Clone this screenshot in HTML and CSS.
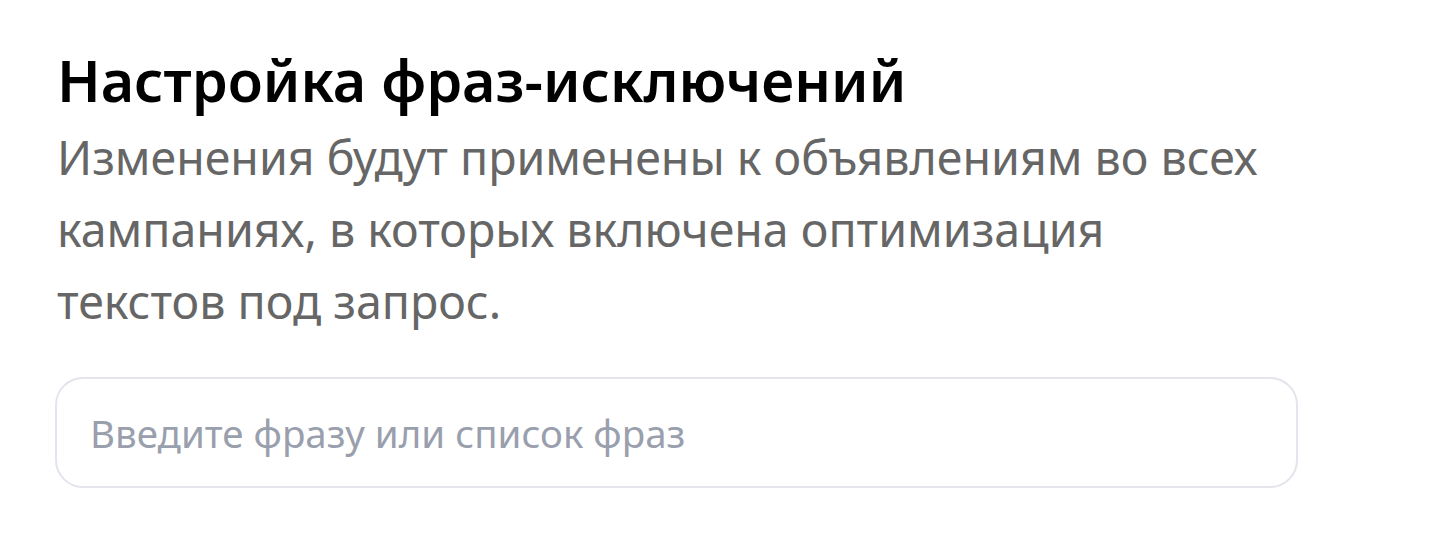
FILE: index.html
```html
<!DOCTYPE html>
<html lang="ru">
<head>
    <meta charset="UTF-8">
    <meta name="viewport" content="width=device-width, initial-scale=1.0">
    <title>Настройка фраз-исключений</title>
    <link rel="stylesheet" href="styles.css">
</head>
<body>
    <div class="panel">
        <h1 class="title">Настройка фраз-исключений</h1>
        <p class="description">
            Изменения будут применены к объявлениям во всех<br>
            кампаниях, в которых включена оптимизация<br>
            текстов под запрос.
        </p>
        <div class="field">
            <input type="text" class="field-input" placeholder="Введите фразу или список фраз">
        </div>
    </div>
</body>
</html>
```

FILE: styles.css
```css
:root {
    --text-color: #000;
    --muted-color: #666;
    --placeholder-color: #9a9fae;
    --border-color: #e3e4ec;
}

* {
    margin: 0;
    padding: 0;
    box-sizing: border-box;
}

body {
    font-family: 'Noto Sans', sans-serif;
    background-color: #fff;
}

.panel {
    padding: 45px 148px 0 55px;
    display: flex;
    flex-direction: column;
}

.title {
    font-size: 57.5px;
    font-weight: 600;
    line-height: 70px;
    color: var(--text-color);
    padding-left: 2px;
}

.description {
    margin-top: 6px;
    font-size: 46.5px;
    line-height: 72px;
    color: var(--muted-color);
    padding-left: 2px;
}

.field {
    margin-top: 40px;
}

.field-input {
    width: 100%;
    height: 111px;
    padding: 0 33px;
    border: 2px solid var(--border-color);
    border-radius: 28px;
    font-family: inherit;
    font-size: 38.5px;
    color: var(--text-color);
    outline: none;
}

.field-input::placeholder {
    color: var(--placeholder-color);
}
```
